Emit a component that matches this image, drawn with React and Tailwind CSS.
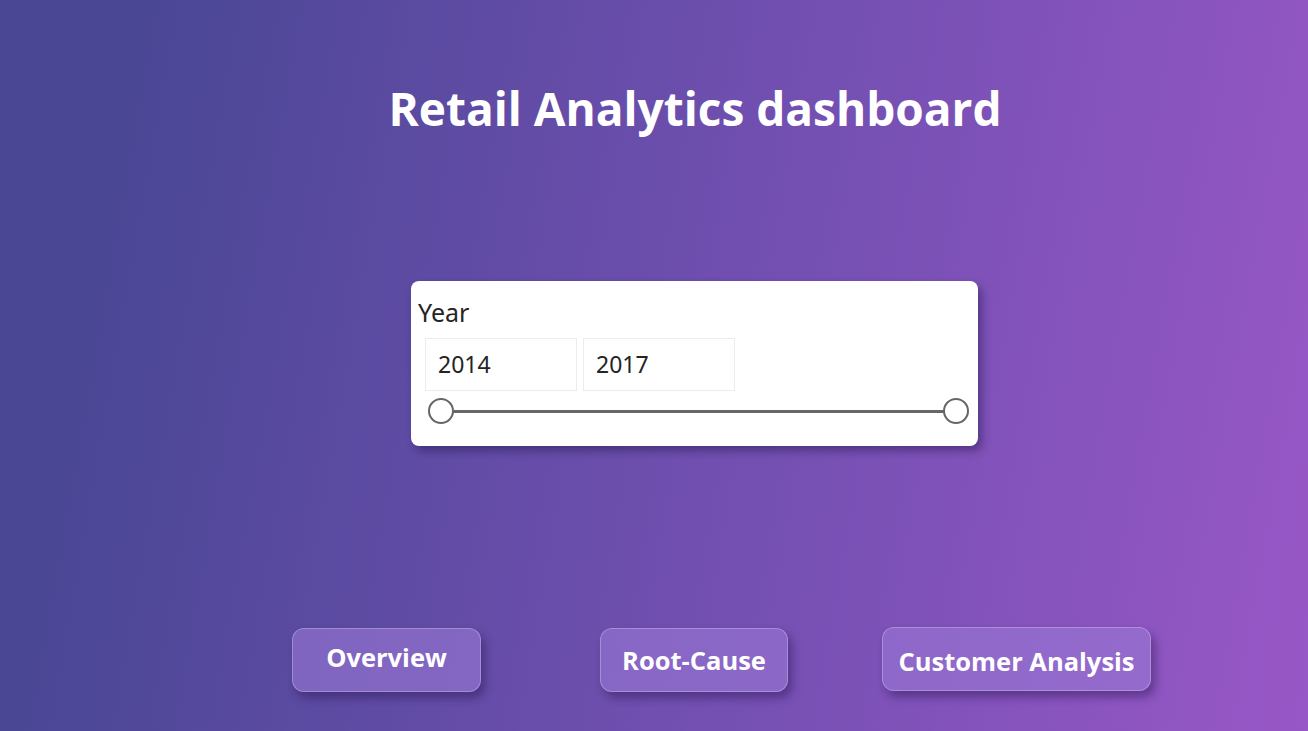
const years = ['2014', '2017'];

const NavButton = ({ label, className }) => (
  <button
    className={`h-16 rounded-xl border border-white/25 bg-[#9a78d6]/60 text-white font-bold text-[25.5px] whitespace-nowrap shadow-[4px_6px_10px_rgba(40,20,80,0.45)] ${className}`}
  >
    {label}
  </button>
);

const App = () => {
  return (
    <div className="w-[1308px] h-[731px] overflow-hidden bg-[linear-gradient(100deg,#4a4795_10%,#7550b3_60%,#9857c6_100%)] font-['Open_Sans',sans-serif]">
      {/* Title */}
      <h1 className="pt-[76px] ml-[349px] w-[692px] text-center whitespace-nowrap text-white font-bold text-[46px] leading-[64px]">
        Retail Analytics dashboard
      </h1>

      {/* Year slicer */}
      <div className="mt-[141px] ml-[411px] w-[567px] h-[165px] bg-white rounded-lg shadow-[4px_5px_8px_rgba(30,20,70,0.45)] px-[7px] pt-[15px]">
        <div className="text-[25px] leading-[32px] text-[#252423] font-['Noto_Sans',sans-serif]">Year</div>
        <div className="flex gap-[6px] mt-[10px] ml-[7px]">
          {years.map((y) => (
            <div key={y} className="w-[152px] h-[53px] border border-[#ececec] flex items-center pl-[12px] text-[23px] text-[#252423] font-['Noto_Sans',sans-serif]">
              {y}
            </div>
          ))}
        </div>
        <div className="relative mt-[7px] ml-[23px] mr-[15px] h-[26px] flex items-center">
          <div className="w-full h-[3px] bg-[#666666]" />
          <div className="absolute left-[-13px] top-0 w-[26px] h-[26px] rounded-full bg-white border-2 border-[#666666]" />
          <div className="absolute right-[-13px] top-0 w-[26px] h-[26px] rounded-full bg-white border-2 border-[#666666]" />
        </div>
      </div>

      {/* Navigation */}
      <div className="flex items-start mt-[182px] ml-[292px]">
        <NavButton label="Overview" className="w-[189px] pb-[6px]" />
        <NavButton label="Root-Cause" className="w-[188px] ml-[119px]" />
        <NavButton label="Customer Analysis" className="w-[269px] ml-[94px] -mt-px pt-[4px]" />
      </div>
    </div>
  );
};

export default App;
